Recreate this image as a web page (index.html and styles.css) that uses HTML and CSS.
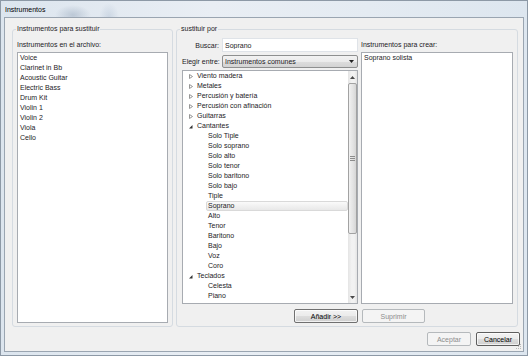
FILE: index.html
```html
<!DOCTYPE html>
<html lang="es">
<head>
    <meta charset="UTF-8">
    <title>Instrumentos</title>
    <link rel="stylesheet" href="styles.css">
</head>
<body>
    <div class="window">
        <div class="titlebar">Instrumentos</div>
        <div class="client">
            <div class="groups">
                <fieldset class="group">
                    <legend>Instrumentos para sustituir</legend>
                    <div class="group-body">
                        <div class="field-label">Instrumentos en el archivo:</div>
                        <ul class="listbox">
                            <li>Voice</li>
                            <li>Clarinet in Bb</li>
                            <li>Acoustic Guitar</li>
                            <li>Electric Bass</li>
                            <li>Drum Kit</li>
                            <li>Violin 1</li>
                            <li>Violin 2</li>
                            <li>Viola</li>
                            <li>Cello</li>
                        </ul>
                    </div>
                </fieldset>

                <fieldset class="group">
                    <legend>sustituir por</legend>
                    <div class="group-body cols">
                        <div class="col">
                            <div class="row search-row">
                                <label for="search">Buscar:</label>
                                <input class="textbox" id="search" type="text" value="Soprano">
                            </div>
                            <div class="row choose-row">
                                <label>Elegir entre:</label>
                                <div class="combo">
                                    <span>Instrumentos comunes</span>
                                    <svg width="5" height="3" viewBox="0 0 5 3"><polygon points="0,0 5,0 2.5,3" fill="#222"/></svg>
                                </div>
                            </div>
                            <div class="tree">
                                <ul class="tree-items">
                                    <li class="node"><svg class="exp" width="6" height="7" viewBox="0 0 6 7"><polygon points="1.5,1.5 4.5,3.5 1.5,5.5" fill="none" stroke="#8a8a8a" stroke-width="0.9"/></svg>Viento madera</li>
                                    <li class="node"><svg class="exp" width="6" height="7" viewBox="0 0 6 7"><polygon points="1.5,1.5 4.5,3.5 1.5,5.5" fill="none" stroke="#8a8a8a" stroke-width="0.9"/></svg>Metales</li>
                                    <li class="node"><svg class="exp" width="6" height="7" viewBox="0 0 6 7"><polygon points="1.5,1.5 4.5,3.5 1.5,5.5" fill="none" stroke="#8a8a8a" stroke-width="0.9"/></svg>Percusión y batería</li>
                                    <li class="node"><svg class="exp" width="6" height="7" viewBox="0 0 6 7"><polygon points="1.5,1.5 4.5,3.5 1.5,5.5" fill="none" stroke="#8a8a8a" stroke-width="0.9"/></svg>Percusión con afinación</li>
                                    <li class="node"><svg class="exp" width="6" height="7" viewBox="0 0 6 7"><polygon points="1.5,1.5 4.5,3.5 1.5,5.5" fill="none" stroke="#8a8a8a" stroke-width="0.9"/></svg>Guitarras</li>
                                    <li class="node"><svg class="exp" width="6" height="7" viewBox="0 0 6 7"><polygon points="4.5,2 4.5,5.5 1,5.5" fill="#333"/></svg>Cantantes</li>
                                    <li class="leaf">Solo Tiple</li>
                                    <li class="leaf">Solo soprano</li>
                                    <li class="leaf">Solo alto</li>
                                    <li class="leaf">Solo tenor</li>
                                    <li class="leaf">Solo baritono</li>
                                    <li class="leaf">Solo bajo</li>
                                    <li class="leaf">Tiple</li>
                                    <li class="leaf selected">Soprano</li>
                                    <li class="leaf">Alto</li>
                                    <li class="leaf">Tenor</li>
                                    <li class="leaf">Baritono</li>
                                    <li class="leaf">Bajo</li>
                                    <li class="leaf">Voz</li>
                                    <li class="leaf">Coro</li>
                                    <li class="node"><svg class="exp" width="6" height="7" viewBox="0 0 6 7"><polygon points="4.5,2 4.5,5.5 1,5.5" fill="#333"/></svg>Teclados</li>
                                    <li class="leaf">Celesta</li>
                                    <li class="leaf">Piano</li>
                                    <li class="leaf">Teclado</li>
                                </ul>
                                <div class="vscroll">
                                    <div class="scroll-btn">
                                        <svg width="5" height="3" viewBox="0 0 5 3"><polygon points="2.5,0 5,3 0,3" fill="#4a4a4a"/></svg>
                                    </div>
                                    <div class="thumb">
                                        <svg width="5" height="5" viewBox="0 0 5 5"><path d="M0 0.5h5M0 2.5h5M0 4.5h5" stroke="#8c8c8c" stroke-width="1"/></svg>
                                    </div>
                                    <div class="track"></div>
                                    <div class="scroll-btn">
                                        <svg width="5" height="3" viewBox="0 0 5 3"><polygon points="0,0 5,0 2.5,3" fill="#4a4a4a"/></svg>
                                    </div>
                                </div>
                            </div>
                            <div class="btn-row end">
                                <button class="btn add-btn">Añadir &gt;&gt;</button>
                            </div>
                        </div>

                        <div class="col">
                            <div class="field-label">Instrumentos para crear:</div>
                            <ul class="listbox">
                                <li>Soprano solista</li>
                            </ul>
                            <div class="btn-row">
                                <button class="btn remove-btn" disabled>Suprimir</button>
                            </div>
                        </div>
                    </div>
                </fieldset>
            </div>

            <div class="dialog-buttons">
                <button class="btn dlg-btn" disabled>Aceptar</button>
                <button class="btn dlg-btn default">Cancelar</button>
            </div>

            <svg class="grip" width="6" height="6" viewBox="0 0 6 6">
                <rect x="4" y="0" width="1" height="1" fill="#b8b8b8"/>
                <rect x="2" y="2" width="1" height="1" fill="#b8b8b8"/>
                <rect x="4" y="2" width="1" height="1" fill="#b8b8b8"/>
                <rect x="0" y="4" width="1" height="1" fill="#b8b8b8"/>
                <rect x="2" y="4" width="1" height="1" fill="#b8b8b8"/>
                <rect x="4" y="4" width="1" height="1" fill="#b8b8b8"/>
            </svg>
        </div>
    </div>
</body>
</html>
```

FILE: styles.css
```css
* {
    margin: 0;
    padding: 0;
    box-sizing: border-box;
}

body {
    font-family: "Liberation Sans", Arial, sans-serif;
    font-size: 7px;
    color: #1c1a1e;
    background: #dfe7ef;
}

.window {
    width: 528px;
    height: 356px;
    border: 1px solid #8d99a6;
    padding: 0 3px 3px;
    display: flex;
    flex-direction: column;
    background:
        radial-gradient(ellipse 18px 10px at 72px 14px, rgba(120, 140, 165, 0.35), transparent),
        radial-gradient(ellipse 10px 14px at 108px 16px, rgba(150, 170, 195, 0.3), transparent),
        linear-gradient(90deg, #dce5ee 0%, #e9eef4 40%, #e4ebf2 70%, #dde6ef 100%);
}

.titlebar {
    height: 16px;
    line-height: 17px;
    padding-left: 1px;
    color: #000;
}

.client {
    position: relative;
    flex: 1;
    background: #f0f0f0;
    border: 1px solid #9aa5b1;
    padding: 6px 5px 5px 7px;
    display: flex;
    flex-direction: column;
}

/* group boxes */

.groups {
    display: grid;
    grid-template-columns: 161px 342px;
    column-gap: 3px;
}

.group {
    min-width: 0;
    border: 1px solid #d5dbe1;
    border-radius: 3px;
    padding: 4px 4px 3px;
}

.group legend {
    line-height: 10px;
    padding: 0 1px;
    margin-left: -1px;
}

.group-body {
    height: 285px;
    display: flex;
    flex-direction: column;
}

.group-body.cols {
    flex-direction: row;
    gap: 3px;
    margin-left: 1px;
}

.col {
    display: flex;
    flex-direction: column;
}

.col:first-child {
    width: 176px;
}

.col:last-child {
    flex: 1;
}

.field-label {
    height: 14px;
    line-height: 13px;
}

/* list boxes */

.listbox {
    flex: 1;
    list-style: none;
    background: #fff;
    border: 1px solid #a7abb1;
    padding: 0 0 0 2px;
    overflow: hidden;
}

.listbox li {
    line-height: 10px;
}

/* search / choose rows */

.row {
    display: flex;
    align-items: center;
}

.search-row {
    height: 14px;
    justify-content: flex-end;
    gap: 3px;
}

.choose-row {
    height: 13px;
    margin-top: 3px;
    justify-content: space-between;
}

.textbox {
    width: 136px;
    height: 14px;
    border: 1px solid #dfe3e8;
    background: #fff;
    padding: 0 2px;
    font: inherit;
    color: inherit;
    outline: none;
}

.combo {
    width: 136px;
    height: 13px;
    border: 1px solid #8e8f8f;
    border-radius: 2px;
    background: linear-gradient(#f2f2f2 0%, #ebebeb 50%, #dddddd 51%, #d3d3d3 100%);
    padding: 0 3px 0 2px;
    display: flex;
    align-items: center;
    justify-content: space-between;
}

/* tree */

.tree {
    flex: 1;
    margin-top: 2px;
    display: flex;
    background: #fff;
    border: 1px solid #a7abb1;
    overflow: hidden;
}

.tree-items {
    flex: 1;
    list-style: none;
    overflow: hidden;
}

.tree-items li {
    height: 10px;
    line-height: 10px;
    white-space: nowrap;
}

.node {
    display: flex;
    align-items: center;
    padding-left: 5px;
}

.exp {
    margin-right: 3px;
}

.leaf {
    margin-left: 23px;
    padding-left: 2px;
}

.leaf.selected {
    border: 1px solid #d9d9d9;
    border-radius: 2px;
    background: linear-gradient(#fafafa, #e8e8e8);
    line-height: 8px;
    padding-left: 1px;
}

.vscroll {
    width: 9px;
    display: flex;
    flex-direction: column;
    background: linear-gradient(90deg, #e4e4e4, #f2f2f2 40%, #f2f2f2 70%, #e4e4e4);
}

.scroll-btn {
    height: 12px;
    display: flex;
    align-items: center;
    justify-content: center;
}

.scroll-btn:last-child {
    height: 11px;
}

.thumb {
    height: 151px;
    border: 1px solid #a2a2a2;
    border-radius: 2px;
    background: linear-gradient(90deg, #f1f1f1, #e2e2e2 60%, #d6d6d6);
    display: flex;
    align-items: center;
    justify-content: center;
}

.track {
    flex: 1;
}

/* buttons */

.btn-row {
    display: flex;
    margin-top: 5px;
}

.btn-row.end {
    justify-content: flex-end;
}

.btn {
    height: 14px;
    font: inherit;
    color: #000;
    border: 1px solid #707070;
    border-radius: 2px;
    background: linear-gradient(#f2f2f2 0%, #ebebeb 50%, #dddddd 51%, #cfcfcf 100%);
    box-shadow: inset 0 0 0 1px rgba(255, 255, 255, 0.7);
    padding: 0;
}

.btn:disabled {
    color: #8d8d8d;
    border-color: #b5b9bc;
    background: #f4f4f4;
    box-shadow: none;
}

.add-btn {
    width: 64px;
}

.remove-btn {
    width: 63px;
    margin-left: 1px;
}

.dialog-buttons {
    display: flex;
    justify-content: flex-end;
    gap: 5px;
    margin-top: 5px;
    margin-right: -2px;
}

.dlg-btn {
    width: 44px;
}

.dlg-btn.default {
    border-color: #5e5e5e;
}

.grip {
    position: absolute;
    right: 1px;
    bottom: 1px;
}
```
